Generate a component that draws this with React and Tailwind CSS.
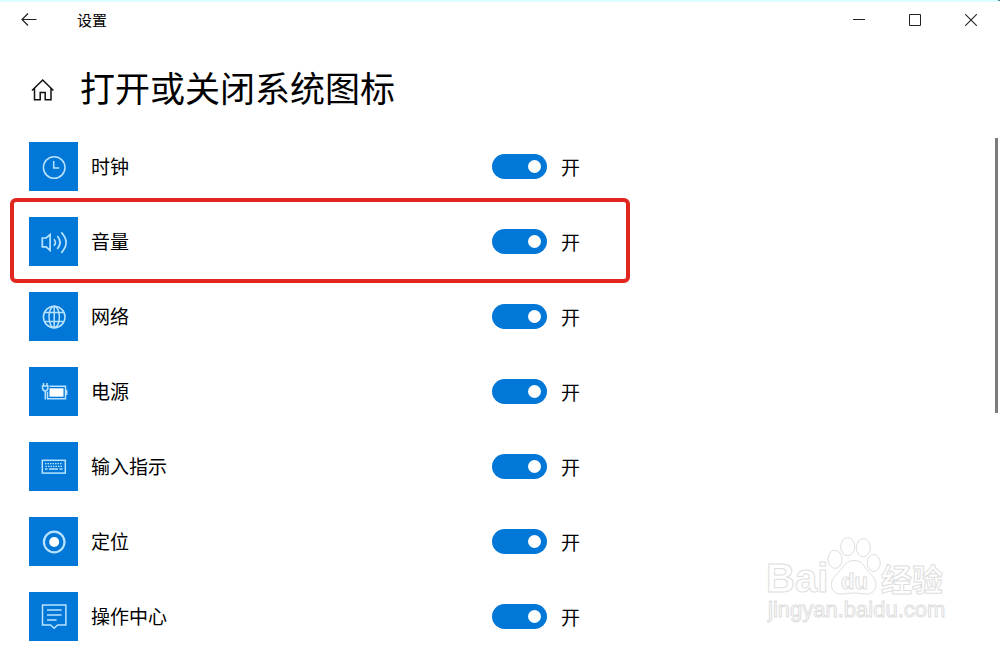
import { useState } from "react";

const stroke = {
  fill: "none",
  stroke: "#b9e3ff",
  strokeWidth: 1.5,
};

function ClockIcon() {
  return (
    <g {...stroke}>
      <circle cx="25.2" cy="25.5" r="10.8" />
      <path d="M24.7 19v7h5.6" />
    </g>
  );
}

function VolumeIcon() {
  return (
    <g {...stroke} strokeWidth="1.7">
      <path d="M13.3 21h3.8l4-3.4v15.8l-4-3.6h-3.8z" />
      <path d="M25 22.2q2.800 3.200 0 6.600M28.300 19q5.600 6.400 0 13M32.300 15.400q9.600 10 0 20.400" />
    </g>
  );
}

function NetworkIcon() {
  return (
    <g {...stroke} strokeWidth="1.5">
      <circle cx="25.2" cy="25" r="10.8" />
      <ellipse cx="25.2" cy="25" rx="5.2" ry="10.8" />
      <path d="M25.2 14.2v21.6M15.7 20.5h19M15.7 29.5h19" />
    </g>
  );
}

function PowerIcon() {
  return (
    <g {...stroke}>
      <path d="M20.5 19.2h16v12.6h-18v-7" />
      <path d="M37.7 23v5" />
      <rect x="20.5" y="21.3" width="14" height="8.4" fill="#fff" stroke="none" />
      <path d="M14.5 16v3M18 16v3M16.3 24v8.5" />
      <path d="M13.5 19h5.4v2.2q-.4 2.600-2.700 2.800-2.300-.2-2.700-2.800z" />
    </g>
  );
}

function KeyboardIcon() {
  return (
    <g {...stroke}>
      <rect x="13.3" y="18.3" width="23" height="12.8" />
      <path d="M16 21.7h17.5" strokeDasharray="1.5 1" strokeWidth="1.3" />
      <path d="M16.5 24.3h16.5" strokeDasharray="1.5 1" strokeWidth="1.3" />
      <path d="M16 27h2.5M20 27h9M30.5 27h3" strokeWidth="1.3" />
    </g>
  );
}

function LocationIcon() {
  return (
    <g {...stroke}>
      <circle cx="25.2" cy="25" r="10.3" strokeWidth="2.2" />
      <circle cx="25.2" cy="25" r="5" fill="#fff" stroke="none" />
    </g>
  );
}

function ActionCenterIcon() {
  return (
    <g {...stroke}>
      <path d="M13.5 13h23.400v20h-8.300l-3.500 3.200-3.500-3.200h-8.100z" />
      <path d="M18 18h14.600M18 23h14.600M18 28h9.600" />
    </g>
  );
}

const items = [
  { id: "clock", label: "时钟", Icon: ClockIcon },
  { id: "volume", label: "音量", Icon: VolumeIcon, marked: true },
  { id: "network", label: "网络", Icon: NetworkIcon },
  { id: "power", label: "电源", Icon: PowerIcon },
  { id: "input", label: "输入指示", Icon: KeyboardIcon },
  { id: "location", label: "定位", Icon: LocationIcon },
  { id: "action", label: "操作中心", Icon: ActionCenterIcon },
];

function SettingRow({ id, label, Icon, marked, on, onToggle }) {
  return (
    <li className="relative flex items-center">
      <svg className="size-[49px] shrink-0 bg-[#0177d7]" viewBox="0 0 49 49" aria-hidden="true">
        <Icon />
      </svg>
      <label htmlFor={id} className="ml-[13px] flex-1 pb-0.5">
        {label}
      </label>
      <input
        id={id}
        type="checkbox"
        role="switch"
        checked={on}
        onChange={onToggle}
        className="flex h-[25px] w-[55px] appearance-none items-center rounded-full bg-[#8a8a8a] px-[6px] before:size-[13px] before:rounded-full before:bg-white checked:justify-end checked:bg-[#0177d7]"
      />
      <span className="ml-3.5 w-[49px]">{on ? "开" : "关"}</span>

      {marked && (
        <div className="pointer-events-none absolute -top-[19px] -right-5 -bottom-[17px] -left-[19px] rounded-md border-4 border-[#e0261f]" />
      )}
    </li>
  );
}

function Watermark() {
  return (
    <svg
      className="pointer-events-none absolute right-[52px] bottom-[22px] h-[88px] w-[184px]"
      viewBox="0 0 184 88"
      fill="#fff"
      stroke="#dedede"
      strokeWidth="1"
      fontFamily="'Liberation Sans', 'Noto Sans CJK SC', sans-serif"
    >
      <text x="2" y="57" fontSize="40" fontWeight="bold">Bai</text>
      <ellipse cx="71" cy="24.3" rx="7" ry="9" />
      <ellipse cx="83.7" cy="11.7" rx="7" ry="9" />
      <ellipse cx="99.3" cy="12.7" rx="7" ry="9" />
      <ellipse cx="109.7" cy="28" rx="6.5" ry="8.5" />
      <path d="M90 25.500c7 0 10 5 13 9.500 4 5 9 8 9 14.500 0 6-4 9.500-9.500 9.500-5 0-8-1-12.500-1s-8 1-13 1c-5.500 0-9.500-3.500-9.500-9.500 0-6.500 5-9.500 9-14.500 3.500-4.500 6.500-9.500 13.500-9.500z" />
      <text x="77" y="54" fontSize="22" fontWeight="bold">du</text>
      <text x="117" y="56" fontSize="31" fontWeight="bold">经验</text>
      <text x="4" y="82" fontSize="22">jingyan.baidu.com</text>
    </svg>
  );
}

function App() {
  const [state, setState] = useState(
    Object.fromEntries(items.map((item) => [item.id, true]))
  );

  const toggle = (id) => setState({ ...state, [id]: !state[id] });

  return (
    <div className="relative min-h-screen bg-white font-['Noto_Sans_CJK_SC',sans-serif] text-black">
      <div className="flex h-0.5 justify-end bg-[#dcfdff]">
        <span className="h-px w-0.5 bg-[#5d8294]" />
      </div>

      <header className="flex h-9 items-center pr-px">
        <button aria-label="返回" className="ml-5 flex h-9 w-[18px] items-center">
          <svg className="size-[18px]" viewBox="0 0 18 18" fill="none" stroke="#222" strokeWidth="1.2">
            <path d="M16.5 8.500H2M8 2.500l-6 6 6 6" />
          </svg>
        </button>
        <span className="ml-[39px] flex-1 text-[15px] leading-5">设置</span>
        <button aria-label="最小化" className="flex h-9 w-14 items-center justify-center">
          <svg className="size-3" viewBox="0 0 12 12" fill="none" stroke="#222">
            <path d="M0 5.500h12" />
          </svg>
        </button>
        <button aria-label="最大化" className="flex h-9 w-14 items-center justify-center">
          <svg className="size-3" viewBox="0 0 12 12" fill="none" stroke="#222">
            <path d="M.5.500h11v11H.5z" />
          </svg>
        </button>
        <button aria-label="关闭" className="flex h-9 w-14 items-center justify-center">
          <svg className="size-3" viewBox="0 0 12 12" fill="none" stroke="#222" strokeWidth="1.1">
            <path d="M.2.200l11.600 11.600M11.800.200L.2 11.800" />
          </svg>
        </button>
      </header>

      <div className="mt-[23px] flex h-[52px] items-center">
        <button aria-label="主页" className="ml-[31px] pt-1.5">
          <svg className="size-6" viewBox="0 0 24 24" fill="none" stroke="#111" strokeWidth="1.5">
            <path d="M1 12.500L11.700 2l10.700 10.500M3.500 10.500v11.300h5.700v-7.300h5v7.300H20V10.500" />
          </svg>
        </button>
        <h1 className="ml-[25px] text-[35px] leading-[52px]">打开或关闭系统图标</h1>
      </div>

      <main className="flex items-start justify-between pt-[25px]">
        <ul className="mt-1 ml-[29px] flex w-full max-w-[581px] flex-col gap-[26px] text-[19px] leading-7">
          {items.map((item) => (
            <SettingRow
              key={item.id}
              {...item}
              on={state[item.id]}
              onToggle={() => toggle(item.id)}
            />
          ))}
        </ul>
        <div className="mr-0.5 h-[275px] w-[3px] shrink-0 bg-[#7c7c7c]" />
      </main>

      <Watermark />
    </div>
  );
}

export default App;
